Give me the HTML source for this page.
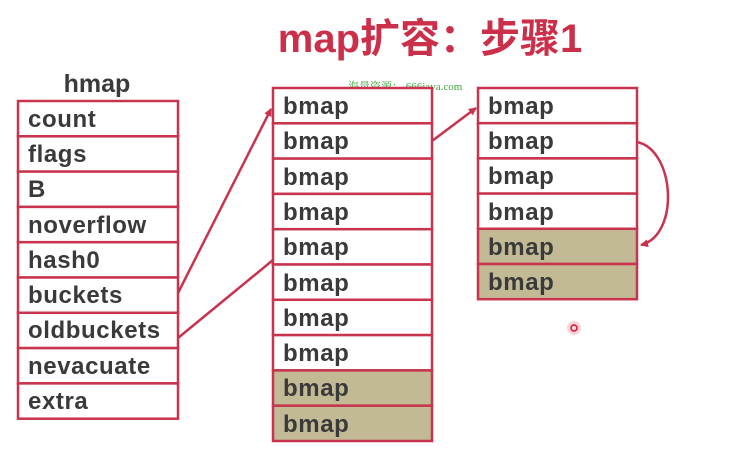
<!DOCTYPE html>
<html><head><meta charset="utf-8"><style>
html,body{margin:0;padding:0;background:#fff;width:732px;height:457px;overflow:hidden}
text{font-family:"Liberation Sans","Noto Sans CJK SC",sans-serif;font-weight:bold}
</style></head><body>
<svg width="732" height="457" viewBox="0 0 732 457" xmlns="http://www.w3.org/2000/svg">
<defs><marker id="ah" markerWidth="8" markerHeight="8" refX="7" refY="4" orient="auto" markerUnits="userSpaceOnUse"><path d="M0,0 L8,4 L0,8 Z" fill="#c8334d"/></marker></defs>
<text x="430" y="52" text-anchor="middle" font-size="40" fill="#cc2f4a">map扩容：步骤1</text>
<text x="97" y="92" text-anchor="middle" font-size="25" fill="#3a3a3a">hmap</text>
<text x="348" y="90" font-size="11" fill="#3aa83a" style="font-family:'Liberation Serif','Noto Serif CJK SC',serif;font-weight:normal">海量资源： 666java.com</text>
<g stroke="#c8334d" stroke-width="2.5" fill="none">
<line x1="178" y1="293" x2="271" y2="109" marker-end="url(#ah)"/>
<line x1="178" y1="338" x2="273" y2="260"/>
<line x1="432" y1="141" x2="476" y2="108" marker-end="url(#ah)"/>
<path d="M637,142 C675,150 680,235 641,245" marker-end="url(#ah)"/>
</g>
<g stroke="#c8334d" stroke-width="2.5">
<g>
<rect x="18" y="101" width="160" height="35.3" fill="#fff"/><rect x="18" y="136.3" width="160" height="35.3" fill="#fff"/><rect x="18" y="171.6" width="160" height="35.3" fill="#fff"/><rect x="18" y="206.9" width="160" height="35.3" fill="#fff"/><rect x="18" y="242.2" width="160" height="35.3" fill="#fff"/><rect x="18" y="277.5" width="160" height="35.3" fill="#fff"/><rect x="18" y="312.8" width="160" height="35.3" fill="#fff"/><rect x="18" y="348.1" width="160" height="35.3" fill="#fff"/><rect x="18" y="383.4" width="160" height="35.3" fill="#fff"/>
</g>
<g>
<rect x="273" y="88" width="159" height="35.3" fill="#fff"/><rect x="273" y="123.3" width="159" height="35.3" fill="#fff"/><rect x="273" y="158.6" width="159" height="35.3" fill="#fff"/><rect x="273" y="193.9" width="159" height="35.3" fill="#fff"/><rect x="273" y="229.2" width="159" height="35.3" fill="#fff"/><rect x="273" y="264.5" width="159" height="35.3" fill="#fff"/><rect x="273" y="299.8" width="159" height="35.3" fill="#fff"/><rect x="273" y="335.1" width="159" height="35.3" fill="#fff"/><rect x="273" y="370.4" width="159" height="35.3" fill="#c2b995"/><rect x="273" y="405.7" width="159" height="35.3" fill="#c2b995"/>
</g>
<g>
<rect x="478" y="88" width="159" height="35.2" fill="#fff"/><rect x="478" y="123.2" width="159" height="35.2" fill="#fff"/><rect x="478" y="158.4" width="159" height="35.2" fill="#fff"/><rect x="478" y="193.6" width="159" height="35.2" fill="#fff"/><rect x="478" y="228.8" width="159" height="35.2" fill="#c2b995"/><rect x="478" y="264" width="159" height="35.2" fill="#c2b995"/>
</g>
</g>
<g font-size="24" fill="#3a3a3a" letter-spacing="0.6">
<text x="28" y="127">count</text><text x="28" y="162">flags</text><text x="28" y="197">B</text><text x="28" y="233">noverflow</text><text x="28" y="268">hash0</text><text x="28" y="303">buckets</text><text x="28" y="338">oldbuckets</text><text x="28" y="374">nevacuate</text><text x="28" y="409">extra</text>
<text x="283" y="114">bmap</text><text x="283" y="149">bmap</text><text x="283" y="185">bmap</text><text x="283" y="220">bmap</text><text x="283" y="255">bmap</text><text x="283" y="291">bmap</text><text x="283" y="326">bmap</text><text x="283" y="361">bmap</text><text x="283" y="396">bmap</text><text x="283" y="432">bmap</text>
<text x="488" y="114">bmap</text><text x="488" y="149">bmap</text><text x="488" y="184">bmap</text><text x="488" y="220">bmap</text><text x="488" y="255">bmap</text><text x="488" y="290">bmap</text>
</g>
<circle cx="574" cy="328" r="7" fill="#fbd5da"/>
<circle cx="574" cy="328" r="3" fill="none" stroke="#e0102a" stroke-width="1.5"/>
</svg>
</body></html>
